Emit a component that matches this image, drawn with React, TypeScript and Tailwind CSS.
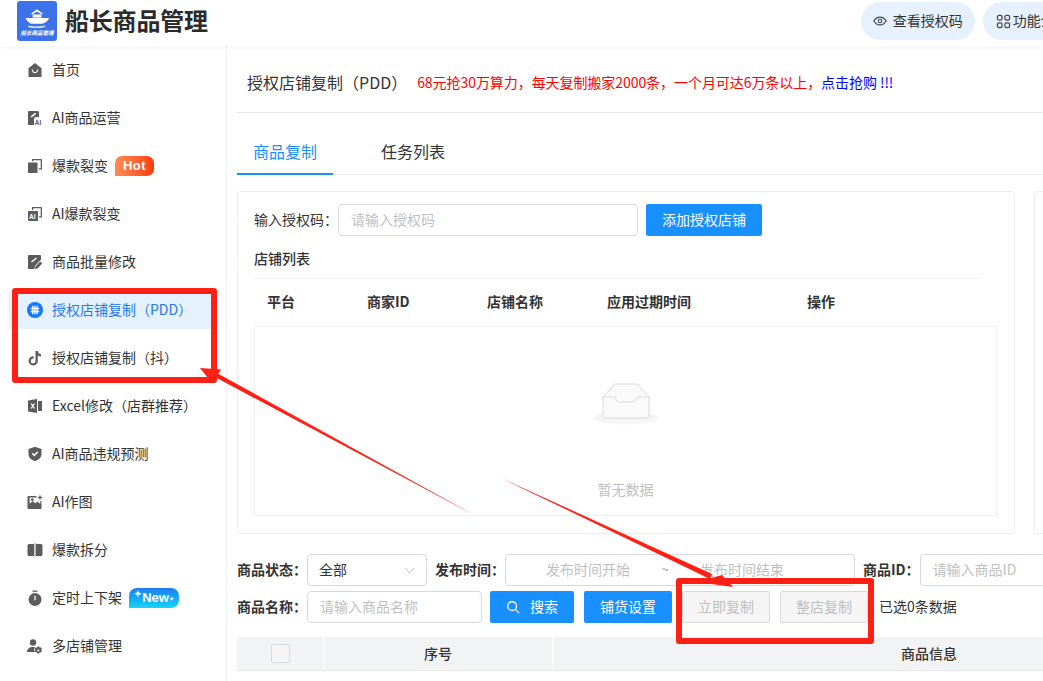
import React, { type ReactNode } from 'react';

const Icon: React.FC<{ children: ReactNode }> = ({ children }) => (
    <svg viewBox="0 0 16 16" className="w-4 h-4 shrink-0 text-[#5c5c5c]" fill="currentColor">
        {children}
    </svg>
);

const HomeIcon = () => (
    <Icon>
        <path fillRule="evenodd" d="M8 1l6.500 5.200V15H1.500V6.200L8 1zM4.600 7.600C5 10 6.300 11.200 8 11.200s3-1.200 3.400-3.600l-1.200-.2C9.900 9.100 9.100 10 8 10s-1.900-.9-2.200-2.600l-1.200.2z" />
    </Icon>
);

const AiDocIcon = () => (
    <Icon>
        <path d="M2 1h9l1 1v5H9a2 2 0 0 0-2 2v6H2a1 1 0 0 1-1-1V2a1 1 0 0 1 1-1z" />
        <path d="M3.500 6.500L8 2.800l1.200 1.200L4.600 7.600z" fill="#fff" />
        <text x="7.800" y="14.500" fontSize="6.500" fontWeight="700" fontFamily="Liberation Sans">AI</text>
    </Icon>
);

const CopyIcon = () => (
    <Icon>
        <path d="M1 4.500h9.500V15H2a1 1 0 0 1-1-1V4.500z" />
        <path d="M5 1h9a1 1 0 0 1 1 1v9.500h-3.200v-1.300h1.900V2.300H6.300v1H5V1z" />
    </Icon>
);

const AiCopyIcon = () => (
    <Icon>
        <path fillRule="evenodd" d="M1 5h10v10H2a1 1 0 0 1-1-1V5z" />
        <path d="M5 1h9a1 1 0 0 1 1 1v9.500h-3v-1.300h1.700V2.300H6.300v1.700H5V1z" />
        <text x="2" y="13" fontSize="6.500" fontWeight="700" fontFamily="Liberation Sans" fill="#fff">AI</text>
    </Icon>
);

const EditIcon = () => (
    <Icon>
        <path d="M2 1h11a1 1 0 0 1 1 1v3.500L8 12l-.5 3H2a1 1 0 0 1-1-1V2a1 1 0 0 1 1-1z" />
        <path d="M4 7.500L9 3.500l1 1-5 4z" fill="#fff" />
        <path d="M13.200 7.500l2 2-4.700 5-2.500.5.500-2.500z" />
    </Icon>
);

const HashIcon = () => (
    <svg viewBox="0 0 16 16" className="w-4 h-4 shrink-0">
        <circle cx="8" cy="8" r="8" fill="#1677ff" />
        <path d="M5.800 3.800v8.400M8 3.800v8.400M10.200 3.800v8.400M3.800 6.500h8.400M3.800 9.500h8.400" stroke="#fff" strokeWidth="1.300" fill="none" />
    </svg>
);

const TiktokIcon = () => (
    <Icon>
        <path d="M8.500 1h2.300c.2 1.800 1.300 3 3.200 3.200v2.300c-1.200 0-2.300-.4-3.200-1v5.400A4.600 4.600 0 1 1 6.700 6.300v2.400a2.300 2.300 0 1 0 1.800 2.200V1z" />
    </Icon>
);

const ExcelIcon = () => (
    <Icon>
        <path d="M1 2.500L10 1v14l-9-1.500V2.500z" />
        <path d="M11 3h4v10h-4z" />
        <path d="M3.500 5.500h1.400l.9 1.600.9-1.600h1.300L6.500 8l1.600 2.500H6.700l-.9-1.600-.9 1.600H3.500L5.100 8z" fill="#fff" />
    </Icon>
);

const ShieldIcon = () => (
    <Icon>
        <path fillRule="evenodd" d="M8 .8l6.500 2.300v5c0 3.500-2.700 6-6.500 7.100-3.800-1.100-6.500-3.600-6.500-7.100v-5L8 .8zM4.800 7.800L7.300 10.400l4.100-4.200-1-1-3.100 3.100-1.500-1.500-1 1z" />
    </Icon>
);

const ImageAiIcon = () => (
    <Icon>
        <path fillRule="evenodd" d="M1.500 2h8v1.500H2.700v6.200l3-2.700 2.600 2.300 2-1.800 3 2.600V7h1.200v7a1 1 0 0 1-1 1H1.500a1 1 0 0 1-1-1V3a1 1 0 0 1 1-1z" />
        <circle cx="5.300" cy="5.700" r="1.400" />
        <path d="M13 .5l.8 2.200 2.200.8-2.200.8-.8 2.200-.8-2.200-2.200-.8 2.200-.8z" />
    </Icon>
);

const SplitIcon = () => (
    <Icon>
        <path d="M7 2H2a1.500 1.500 0 0 0-1.500 1.500v9A1.500 1.500 0 0 0 2 14h5V2z" />
        <path d="M9 2h5a1.500 1.500 0 0 1 1.500 1.500v9A1.500 1.500 0 0 1 14 14H9V2z" />
        <rect x="7.700" y="1" width=".7" height="14" />
    </Icon>
);

const TimerIcon = () => (
    <Icon>
        <path fillRule="evenodd" d="M8 3a6.500 6.500 0 1 1 0 13A6.500 6.500 0 0 1 8 3zm-.6 2.800v4.400h1.200V5.800H7.400z" />
        <rect x="5.500" y=".5" width="5" height="1.300" />
    </Icon>
);

const UserGearIcon = () => (
    <Icon>
        <circle cx="6" cy="4.500" r="3.200" />
        <path d="M0 14c0-3 2.500-5 6-5 .7 0 1.300.1 1.900.2A4.500 4.500 0 0 0 8 14H0z" />
        <path fillRule="evenodd" d="M12.300 8.500l.4 1.200 1.200-.4 1.100 1.800-.9.8.9.9-1.100 1.800-1.200-.4-.4 1.300h-2l-.4-1.300-1.200.4-1-1.800.9-.9-.9-.8 1-1.800 1.200.4.400-1.200h2zm-1 3a1 1 0 1 0 0 2 1 1 0 0 0 0-2z" />
    </Icon>
);

const navItems: { label: string; icon: ReactNode; badge?: ReactNode; active?: boolean }[] = [
    { label: '首页', icon: <HomeIcon /> },
    { label: 'AI商品运营', icon: <AiDocIcon /> },
    {
        label: '爆款裂变',
        icon: <CopyIcon />,
        badge: (
            <span className="-ml-[2px] w-[39px] h-5 rounded-[7px] rounded-bl-none bg-gradient-to-r from-[#ff8a55] to-[#ff3a00] text-white text-[13px] font-bold tracking-[0.4px] flex items-center justify-center [font-family:'Liberation_Sans']">
                Hot
            </span>
        ),
    },
    { label: 'AI爆款裂变', icon: <AiCopyIcon /> },
    { label: '商品批量修改', icon: <EditIcon /> },
    { label: '授权店铺复制（PDD）', icon: <HashIcon />, active: true },
    { label: '授权店铺复制（抖）', icon: <TiktokIcon /> },
    { label: 'Excel修改（店群推荐）', icon: <ExcelIcon /> },
    { label: 'AI商品违规预测', icon: <ShieldIcon /> },
    { label: 'AI作图', icon: <ImageAiIcon /> },
    { label: '爆款拆分', icon: <SplitIcon /> },
    {
        label: '定时上下架',
        icon: <TimerIcon />,
        badge: (
            <span className="-ml-[2px] w-[50px] h-5 rounded-[8px] rounded-bl-none bg-gradient-to-b from-[#1f7cf0] to-[#18d5f7] text-white text-[13px] font-bold flex items-center justify-center [font-family:'Liberation_Sans']">
                <span className="text-[9px] -mt-[7px]">✦</span>
                New
                <span className="text-[6px] mt-[3px]">✦</span>
            </span>
        ),
    },
    { label: '多店铺管理', icon: <UserGearIcon /> },
];

const Sidebar = () => (
    <aside className="w-[227px] shrink-0 border-r border-[#f0f0f0]">
        {navItems.map((item) => (
            <div key={item.label} className="h-12 flex items-center">
                <div
                    className={`ml-[9px] w-[203px] h-[38px] pl-[18px] flex items-center gap-[9px] text-[14px] whitespace-nowrap ${
                        item.active ? 'bg-[#e6f1fe] text-[#2a78ee]' : 'text-[#333]'
                    }`}
                >
                    {item.icon}
                    <span className="mb-[2px]">{item.label}</span>
                    {item.badge}
                </div>
            </div>
        ))}
    </aside>
);

const Header = () => (
    <header className="h-[46px] shrink-0 flex items-center shadow-[0_1px_4px_rgba(0,0,0,0.05)] relative">
        <div className="ml-[17px] w-10 h-10 -mt-[4px] rounded-[3px] bg-[#3d73ea] flex flex-col items-center justify-center shrink-0">
            <svg viewBox="0 0 32 24" className="w-[28px] h-[24px]" fill="#fff">
                <path d="M9 7l7-5 7 5-1.500 1L16 4.500 10.500 8z" />
                <path d="M11 8h10v3.500H11z" />
                <path d="M3 12h27c-2 4-5 6-8 6.500H9C6 17 4 15 3 12z" />
                <path d="M5 20.500c6 1.500 15 1.500 21 0l-2 2c-5 1-12 1-17 0z" />
            </svg>
            <span className="text-[5.500px] leading-[7px] font-bold italic text-white whitespace-nowrap">船长商品管理</span>
        </div>
        <h1 className="ml-[8px] text-[24px] font-bold text-[#2b2b2b] -mt-[6px] whitespace-nowrap tracking-[-0.2px]">船长商品管理</h1>
        <div className="ml-[653px] flex items-center gap-2 -mt-[4px] text-[14px] text-[#333] shrink-0">
            <div className="w-[114px] h-[38px] rounded-[19px] bg-[#e7f1fe] flex items-center justify-center gap-[6px] shrink-0">
                <svg viewBox="0 0 16 16" className="w-[14px] h-[14px]" fill="none" stroke="#444" strokeWidth="1.300">
                    <path d="M1 8c1.800-3 4.200-4.500 7-4.500S13.200 5 15 8c-1.800 3-4.200 4.500-7 4.500S2.800 11 1 8z" />
                    <circle cx="8" cy="8" r="2" />
                </svg>
                <span className="mb-[2px]">查看授权码</span>
            </div>
            <div className="w-[114px] h-[38px] rounded-[19px] bg-[#e7f1fe] flex items-center pl-[13px] gap-[2px] shrink-0 whitespace-nowrap">
                <svg viewBox="0 0 16 16" className="w-[15px] h-[15px]" fill="none" stroke="#444" strokeWidth="1.300">
                    <rect x="1.500" y="1.500" width="5" height="5" rx="1.800" />
                    <rect x="9.500" y="1.500" width="5" height="5" rx="1.800" />
                    <rect x="1.500" y="9.500" width="5" height="5" rx="1.800" />
                    <rect x="9.500" y="9.500" width="5" height="5" rx="1.800" />
                </svg>
                <span className="mb-[2px]">功能介绍</span>
            </div>
        </div>
    </header>
);

const StoreCard = () => (
    <section className="w-[778px] h-[343px] shrink-0 border border-[#eeeeee] rounded-[4px] pl-4 pt-3">
        <div className="flex items-center h-8 text-[14px] text-[#333]">
            <span className="w-[84px] shrink-0 whitespace-nowrap mb-[2px]">输入授权码：</span>
            <input
                placeholder="请输入授权码"
                className="w-[300px] h-8 px-3 pb-[2px] border border-[#d9d9d9] rounded-[4px] text-[14px] placeholder:text-[#bfbfbf] outline-none"
            />
            <button className="ml-2 w-[116px] h-8 pb-[2px] rounded-[2px] bg-[#1890ff] text-white text-[14px]">添加授权店铺</button>
        </div>
        <div className="mt-3 text-[14px] font-medium text-[#333] leading-[20px]">店铺列表</div>
        <div className="mt-[10px] w-[726px] h-12 pb-[2px] border-t border-[#f0f0f0] flex items-center text-[14px] font-bold text-[#333] pl-[13px]">
            <span className="w-[100px]">平台</span>
            <span className="w-[120px]">商家ID</span>
            <span className="w-[120px]">店铺名称</span>
            <span className="w-[200px]">应用过期时间</span>
            <span>操作</span>
        </div>
        <div className="w-[743px] h-[190px] border border-[#f0f0f0] flex flex-col items-center">
            <svg viewBox="0 0 64 42" className="w-16 h-[42px] mt-[56px]">
                <ellipse cx="32" cy="35" rx="32" ry="6.500" fill="#f5f5f5" />
                <path d="M21 1h22l12 13v19a2 2 0 0 1-2 2H11a2 2 0 0 1-2-2V14z" fill="#fafafa" stroke="#d9d9d9" strokeWidth="1" />
                <path d="M9 14h11c2 0 2 5 4.500 5h15c2.500 0 2.500-5 4.500-5h11" fill="none" stroke="#d9d9d9" strokeWidth="1" />
            </svg>
            <span className="mt-[54px] text-[14px] text-[#bfbfbf]">暂无数据</span>
        </div>
    </section>
);

const FieldLabel: React.FC<{ children: ReactNode }> = ({ children }) => (
    <span className="text-[14px] font-bold text-[#333] whitespace-nowrap shrink-0 mb-[2px]">{children}</span>
);

const Filters = () => (
    <div className="mt-5 flex flex-col gap-[5px] text-[14px]">
        <div className="flex items-center h-8">
            <FieldLabel>商品状态：</FieldLabel>
            <div className="w-[120px] h-8 shrink-0 border border-[#d9d9d9] rounded-[4px] px-[11px] flex items-center justify-between text-[#333]">
                <span className="mb-[2px]">全部</span>
                <svg viewBox="0 0 12 8" className="w-[11px] h-[7px]" fill="none" stroke="#bfbfbf" strokeWidth="1"><path d="M1 1l5 6 5-6" /></svg>
            </div>
            <span className="ml-2 flex"><FieldLabel>发布时间：</FieldLabel></span>
            <div className="w-[350px] h-8 shrink-0 border border-[#d9d9d9] rounded-[4px] pl-10 pb-[2px] flex items-center text-[#bfbfbf]">
                <span>发布时间开始</span>
                <span className="ml-[30px] w-[10px] text-[#888] text-[12px] text-center">~</span>
                <span className="ml-[30px]">发布时间结束</span>
            </div>
            <span className="ml-2 flex"><FieldLabel>商品ID：</FieldLabel></span>
            <input
                placeholder="请输入商品ID"
                className="w-[180px] h-8 pb-[2px] shrink-0 border border-[#d9d9d9] rounded-[4px] px-3 text-[14px] placeholder:text-[#bfbfbf] outline-none"
            />
        </div>
        <div className="flex items-center h-8">
            <FieldLabel>商品名称：</FieldLabel>
            <input
                placeholder="请输入商品名称"
                className="w-[175px] h-8 pb-[2px] shrink-0 border border-[#d9d9d9] rounded-[4px] px-3 text-[14px] placeholder:text-[#bfbfbf] outline-none"
            />
            <button className="ml-2 w-[84px] h-8 shrink-0 rounded-[2px] bg-[#1890ff] text-white flex items-center justify-center gap-[10px]">
                <svg viewBox="0 0 16 16" className="w-[14px] h-[14px]" fill="none" stroke="#fff" strokeWidth="1.500">
                    <circle cx="7" cy="7" r="5" />
                    <path d="M11 11l4 4" />
                </svg>
                <span className="mb-[2px]">搜索</span>
            </button>
            <button className="ml-[10px] w-[88px] h-8 pb-[2px] shrink-0 rounded-[2px] bg-[#1890ff] text-white">铺货设置</button>
            <button className="ml-[10px] w-[88px] h-8 pb-[2px] shrink-0 rounded-[2px] bg-[#f5f5f5] border border-[#d9d9d9] text-[#bfbfbf]">立即复制</button>
            <button className="ml-[10px] w-[88px] h-8 pb-[2px] shrink-0 rounded-[2px] bg-[#f5f5f5] border border-[#d9d9d9] text-[#bfbfbf]">整店复制</button>
            <span className="ml-[11px] mb-[2px] text-[#333] whitespace-nowrap">已选0条数据</span>
        </div>
    </div>
);

const GoodsTableHead = () => (
    <div className="mt-[14px] h-[34px] flex gap-px text-[14px] font-medium text-[#333] border-b border-[#e8e8e8]">
        <div className="w-[86px] shrink-0 bg-[#f2f3f5] flex items-center justify-center">
            <span className="w-[19px] h-[19px] bg-[#f5f5f5] border border-[#d9d9d9] rounded-[2px]" />
        </div>
        <div className="w-[228px] shrink-0 bg-[#f2f3f5] flex items-center justify-center">序号</div>
        <div className="w-[752px] shrink-0 bg-[#f2f3f5] flex items-center justify-center">商品信息</div>
    </div>
);

// red marks drawn on top of the screenshot
const Annotations = () => (
    <>
        <div className="absolute left-[12px] top-[288px] w-[205px] h-[95px] border-[6px] border-[#ff2015] rounded-[3px] pointer-events-none" />
        <div className="absolute left-[676px] top-[578px] w-[198px] h-[66px] border-[6px] border-[#ff2015] rounded-[3px] pointer-events-none" />
        <svg viewBox="0 0 1043 681" className="absolute inset-0 w-[1043px] h-[681px] pointer-events-none" fill="#ff2015">
            <path d="M476 516L213 376 215 372z" />
            <path d="M200 368L221 369.500 212 383z" />
            <path d="M501 478L712 574 710 579z" />
            <path d="M733 587L722 575 697 582z" />
        </svg>
    </>
);

export default function App() {
    return (
        <div className="relative w-[1043px] h-[681px] overflow-hidden bg-white flex flex-col font-['Noto_Sans_CJK_SC','Liberation_Sans',sans-serif]">
            <Header />
            <div className="flex flex-1 min-h-0">
                <Sidebar />
                <main className="flex-1 min-w-0 pl-[10px]">
                    <div className="h-[67px] border-b border-[#e5e5e5] pl-[10px] pt-[6px] flex items-center whitespace-nowrap w-[1000px]">
                        <span className="text-[16px] text-[#333]">授权店铺复制（PDD）</span>
                        <span className="ml-[10px] text-[14px] tracking-[-0.06px] text-[#ff0000]">
                            68元抢30万算力，每天复制搬家2000条，一个月可达6万条以上，<span className="text-[#0000ff]">点击抢购 !!!</span>
                        </span>
                    </div>
                    <div className="h-[62px] flex items-end w-[1000px] border-b border-[#eeeeee]">
                        <div className="w-[96px] h-[46px] flex items-center justify-center text-[16px] text-[#1890ff] border-b-2 border-[#1890ff] -mb-px">商品复制</div>
                        <div className="ml-[48px] h-[46px] flex items-center text-[16px] text-[#333]">任务列表</div>
                    </div>
                    <div className="mt-4 flex gap-[19px]">
                        <StoreCard />
                        <section className="w-[300px] h-[343px] shrink-0 border border-[#eeeeee] rounded-[4px]" />
                    </div>
                    <Filters />
                    <GoodsTableHead />
                </main>
            </div>
            <Annotations />
        </div>
    );
}
